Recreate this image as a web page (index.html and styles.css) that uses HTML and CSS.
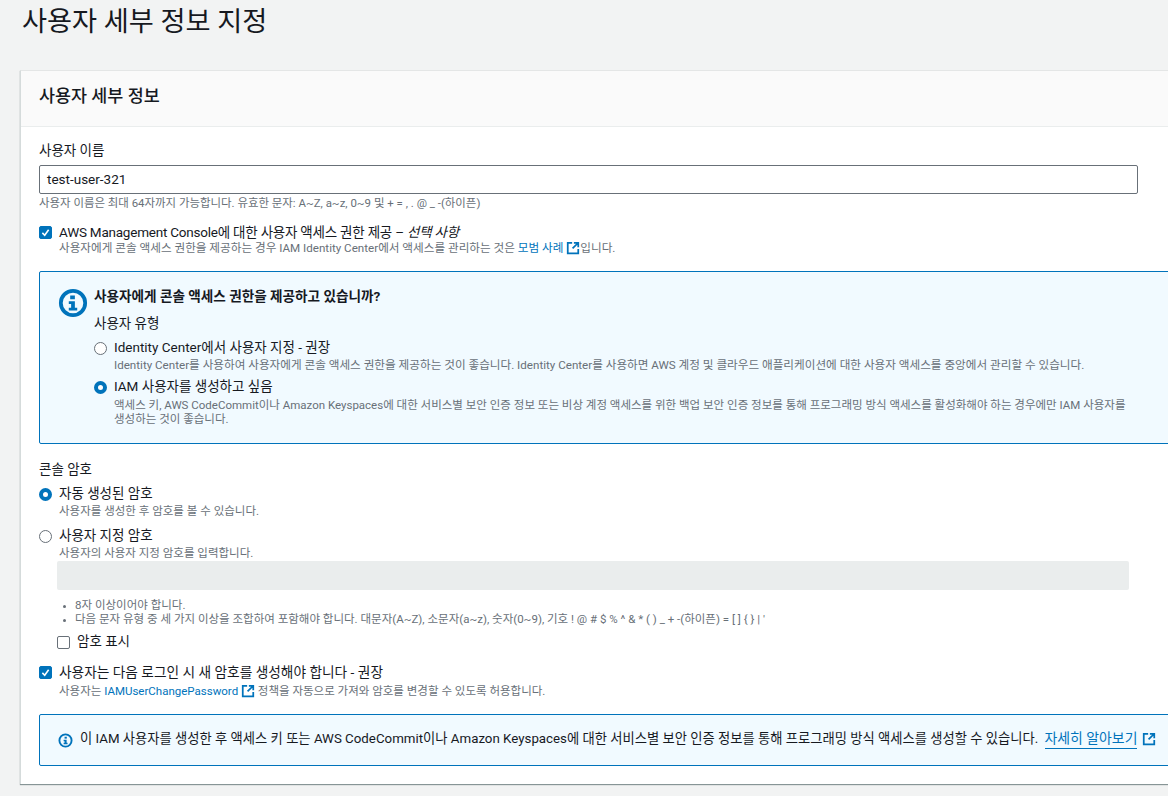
FILE: index.html
```html
<!DOCTYPE html>
<html lang="ko">
<head>
<meta charset="utf-8">
<title>사용자 세부 정보 지정</title>
<link rel="stylesheet" href="styles.css">
</head>
<body>
<svg class="defs" width="0" height="0" aria-hidden="true">
  <symbol id="ext" viewBox="0 0 16 16">
    <path d="M7 2H2v12h12V9" fill="none" stroke="currentColor" stroke-width="2"/>
    <path d="M9 2h5v5M14 2 7.5 8.5" fill="none" stroke="currentColor" stroke-width="2"/>
  </symbol>
</svg>
<h1 class="page-title">사용자 세부 정보 지정</h1>
<main class="card">
  <header class="card-head"><h2>사용자 세부 정보</h2></header>
  <div class="card-body">
    <div class="label">사용자 이름</div>
    <div class="text-input">test-user-321</div>
    <p class="hint">사용자 이름은 최대 64자까지 가능합니다. 유효한 문자: A~Z, a~z, 0~9 및 + = , . @ _ -(하이픈)</p>

    <div class="choice console-check">
      <span class="check on"><svg viewBox="0 0 14 14"><path d="M3 7.5 6 10.5 11 3.5" fill="none" stroke="#fff" stroke-width="2"/></svg></span>
      <div>
        <div class="choice-title">AWS Management Console에 대한 사용자 액세스 권한 제공 – <em>선택 사항</em></div>
        <div class="desc">사용자에게 콘솔 액세스 권한을 제공하는 경우 IAM Identity Center에서 액세스를 관리하는 것은 <a class="link">모범 사례</a> <svg class="ext"><use href="#ext"/></svg>입니다.</div>
      </div>
    </div>

    <section class="alert alert-large">
      <svg class="info-large" viewBox="0 0 32 32"><circle cx="16" cy="16" r="13" fill="none" stroke="#0073bb" stroke-width="4"/><rect x="13" y="8" width="5" height="4" fill="#0073bb"/><path d="M11.5 14H18v7h2.5v3h-9v-3H14v-4h-2.5z" fill="#0073bb"/></svg>
      <div class="alert-content">
        <div class="alert-title">사용자에게 콘솔 액세스 권한을 제공하고 있습니까?</div>
        <div class="type-label">사용자 유형</div>
        <div class="choice type-one">
          <span class="radio"></span>
          <div>
            <div class="choice-title">Identity Center에서 사용자 지정 - 권장</div>
            <div class="desc">Identity Center를 사용하여 사용자에게 콘솔 액세스 권한을 제공하는 것이 좋습니다. Identity Center를 사용하면 AWS 계정 및 클라우드 애플리케이션에 대한 사용자 액세스를 중앙에서 관리할 수 있습니다.</div>
          </div>
        </div>
        <div class="choice type-two">
          <span class="radio on"></span>
          <div>
            <div class="choice-title">IAM 사용자를 생성하고 싶음</div>
            <div class="desc">액세스 키, AWS CodeCommit이나 Amazon Keyspaces에 대한 서비스별 보안 인증 정보 또는 비상 계정 액세스를 위한 백업 보안 인증 정보를 통해 프로그래밍 방식 액세스를 활성화해야 하는 경우에만 IAM 사용자를<br>생성하는 것이 좋습니다.</div>
          </div>
        </div>
      </div>
    </section>

    <div class="label pw-label">콘솔 암호</div>
    <div class="choice pw-auto">
      <span class="radio on"></span>
      <div>
        <div class="choice-title">자동 생성된 암호</div>
        <div class="desc">사용자를 생성한 후 암호를 볼 수 있습니다.</div>
      </div>
    </div>
    <div class="choice pw-custom">
      <span class="radio"></span>
      <div class="grow">
        <div class="choice-title">사용자 지정 암호</div>
        <div class="desc">사용자의 사용자 지정 암호를 입력합니다.</div>
        <div class="disabled-input"></div>
        <ul class="rules">
          <li>8자 이상이어야 합니다.</li>
          <li>다음 문자 유형 중 세 가지 이상을 조합하여 포함해야 합니다. 대문자(A~Z), 소문자(a~z), 숫자(0~9), 기호 ! @ # $ % ^ &amp; * ( ) _ + -(하이픈) = [ ] { } | '</li>
        </ul>
        <div class="show-pw"><span class="check"></span><span>암호 표시</span></div>
      </div>
    </div>

    <div class="choice pw-reset">
      <span class="check on"><svg viewBox="0 0 14 14"><path d="M3 7.5 6 10.5 11 3.5" fill="none" stroke="#fff" stroke-width="2"/></svg></span>
      <div>
        <div class="choice-title">사용자는 다음 로그인 시 새 암호를 생성해야 합니다 - 권장</div>
        <div class="desc">사용자는 <a class="link">IAMUserChangePassword</a> <svg class="ext"><use href="#ext"/></svg> 정책을 자동으로 가져와 암호를 변경할 수 있도록 허용합니다.</div>
      </div>
    </div>

    <section class="alert alert-small">
      <svg class="info-small" viewBox="0 0 16 16"><circle cx="8" cy="8" r="6.5" fill="none" stroke="#0073bb" stroke-width="2"/><rect x="7" y="4" width="2.4" height="2" fill="#0073bb"/><path d="M6 7.2h3.2v3.3h1v1.5H6v-1.5h1V8.7H6z" fill="#0073bb"/></svg>
      <div class="small-text">이 IAM 사용자를 생성한 후 액세스 키 또는 AWS CodeCommit이나 Amazon Keyspaces에 대한 서비스별 보안 인증 정보를 통해 프로그래밍 방식 액세스를 생성할 수 있습니다. <a class="learn">자세히 알아보기</a> <svg class="ext ext-lg"><use href="#ext"/></svg></div>
    </section>
  </div>
</main>
</body>
</html>
```

FILE: styles.css
```css
* { box-sizing: border-box; }
html, body { height: 100%; }
body {
  margin: 0;
  width: 1168px;
  height: 796px;
  overflow: hidden;
  background: #f2f3f3;
  color: #16191f;
  font-family: Roboto, "Noto Sans CJK KR", sans-serif;
  font-size: 13.5px;
  line-height: 18px;
}
.defs { position: absolute; }
h1, h2, p, ul { margin: 0; padding: 0; }
.page-title {
  font-size: 27.2px;
  line-height: 30px;
  font-weight: 400;
  padding: 7px 0 0 22px;
  height: 70px;
}
.card {
  margin-left: 20px;
  width: 1200px;
  height: 714px;
  background: #fff;
  border-top: 1px solid #e4e6e6;
  border-left: 1px solid #d5dbdb;
  box-shadow: 0 1px 1px #879596;
}
.card-head {
  height: 56px;
  background: #fafafa;
  border-bottom: 1px solid #eaeded;
  padding: 15px 0 0 18px;
}
.card-head h2 { font-size: 17.4px; line-height: 20px; font-weight: 500; }
.card-body { padding: 14px 0 0 18px; }
.label { line-height: 18px; }
.text-input {
  width: 1099px;
  height: 29px;
  margin-top: 6px;
  border: 1px solid #687078;
  border-radius: 2px;
  padding: 4px 7px;
}
.hint { font-size: 11.45px; line-height: 16px; color: #687078; margin-top: 1px; }
.choice { display: flex; }
.check {
  flex: none;
  width: 13px;
  height: 13px;
  border: 1px solid #687078;
  border-radius: 2px;
  background: #fff;
}
.check.on { background: #0073bb; border-color: #0073bb; }
.check svg { display: block; width: 11px; height: 11px; }
.radio {
  flex: none;
  width: 13px;
  height: 13px;
  border: 1px solid #687078;
  border-radius: 50%;
  background: #fff;
}
.radio.on { border: 4px solid #0073bb; }
.choice > .check, .choice > .radio { margin: 3px 7px 0 0; }
.choice-title { line-height: 18px; }
.choice-title em { font-style: italic; }
.desc { font-size: 11.5px; line-height: 15px; color: #687078; }
.link { color: #0073bb; }
.ext { display: inline-block; width: 14px; height: 14px; color: #0073bb; vertical-align: -3px; }
.console-check { margin-top: 12px; }
.console-check .choice-title { letter-spacing: -0.22px; }
.console-check .desc, .type-one .desc { font-size: 11.62px; }
.alert {
  display: flex;
  width: 1300px;
  background: #f1faff;
  border: 1px solid #0073bb;
  border-radius: 2px;
}
.alert-large { margin-top: 15px; height: 173px; padding: 15px 0 0 18px; }
.info-large { flex: none; width: 30px; height: 30px; margin: 1px 6px 0 0; }
.alert-content { width: 1060px; }
.alert-title { font-weight: 700; font-size: 13.6px; line-height: 18px; }
.type-label { margin-top: 9px; }
.type-one { margin-top: 6px; }
.type-one > .radio, .type-two > .radio { margin-top: 4px; }
.type-one .desc { margin-top: 2px; }
.type-two { margin-top: 4px; }
.type-two .desc { margin-top: 3px; line-height: 14px; }
.pw-label { margin-top: 16px; }
.pw-auto { margin-top: 6px; }
.pw-auto > .radio, .pw-custom > .radio { margin-top: 4px; }
.pw-auto .desc, .pw-custom .desc { margin-top: 2px; }
.pw-custom { margin-top: 7px; }
.grow { width: 1070px; }
.disabled-input { height: 29px; background: #eaeded; border-radius: 2px; margin: 0 0 0 -2px; }
.rules { list-style: none; margin-top: 8px; font-size: 11.5px; line-height: 14px; color: #687078; }
.rules li { padding-left: 16px; position: relative; }
.rules li::before {
  content: "";
  position: absolute;
  left: 4px;
  top: 7px;
  width: 3px;
  height: 3px;
  border-radius: 50%;
  background: #687078;
}
.show-pw { display: flex; gap: 7px; margin: 6px 0 0 -2px; }
.show-pw .check { margin-top: 4px; }
.pw-reset { margin-top: 13px; }
.pw-reset .choice-title { font-size: 13.7px; }
.pw-reset .desc { margin-top: 3px; }
.alert-small { margin-top: 15px; height: 52px; padding: 14px 0 0 18px; width: 1300px; }
.info-small { flex: none; width: 15px; height: 15px; margin: 4px 7px 0 0; }
.small-text { white-space: nowrap; font-size: 13.3px; }
.learn { color: #0073bb; border-bottom: 1px solid #0073bb; padding-bottom: 2px; font-size: 13.9px; margin-left: 3px; }
.ext-lg { margin-left: 1px; }
```
